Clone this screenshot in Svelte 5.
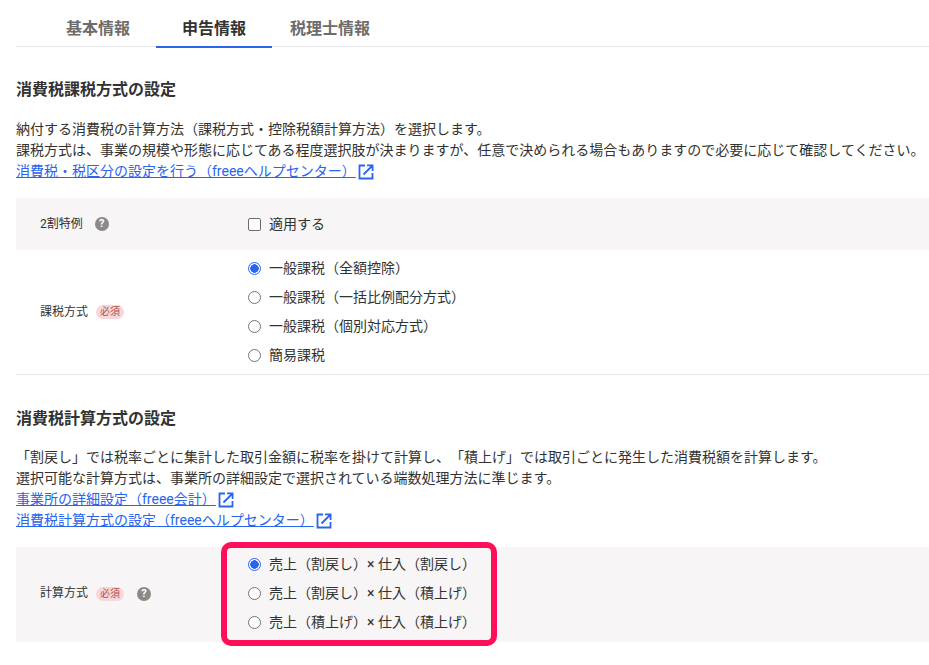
<script>
  const tabs = [
    { label: '基本情報' },
    { label: '申告情報', active: true },
    { label: '税理士情報' }
  ];
  const taxMethods = ['一般課税（全額控除）', '一般課税（一括比例配分方式）', '一般課税（個別対応方式）', '簡易課税'];
  const calcMethods = [
    '売上（割戻し）× 仕入（割戻し）',
    '売上（割戻し）× 仕入（積上げ）',
    '売上（積上げ）× 仕入（積上げ）'
  ];
</script>

{#snippet external()}
  <svg class="ext" viewBox="0 0 18 18" width="18" height="18" aria-hidden="true">
    <path d="M8 2.5H2.5v13h13V10" fill="none" stroke="#2864f0" stroke-width="1.8" />
    <path d="M6.5 11.5 15 3M10 2.4h5.6V8" fill="none" stroke="#2864f0" stroke-width="1.8" />
  </svg>
{/snippet}

{#snippet help()}
  <span class="help">?</span>
{/snippet}

{#snippet radio(checked)}
  <span class="radio" class:checked></span>
{/snippet}

<div class="page">
  <nav class="tabs">
    {#each tabs as tab}
      <span class="tab" class:active={tab.active}>{tab.label}</span>
    {/each}
  </nav>

  <section class="first">
    <h2>消費税課税方式の設定</h2>
    <p>
      納付する消費税の計算方法（課税方式・控除税額計算方法）を選択します。<br />
      課税方式は、事業の規模や形態に応じてある程度選択肢が決まりますが、任意で決められる場合もありますので必要に応じて確認してください。<br />
      <a href="#top">消費税・税区分の設定を行う（freeeヘルプセンター）</a>{@render external()}
    </p>

    <div class="row shaded first-row">
      <div class="label">2割特例<span class="gap"></span>{@render help()}</div>
      <label class="option"><span class="check"></span>適用する</label>
    </div>
    <div class="row ruled">
      <div class="label">課税方式<span class="req">必須</span></div>
      <div class="options">
        {#each taxMethods as name, i}
          <div class="option">{@render radio(i === 0)}{name}</div>
        {/each}
      </div>
    </div>
  </section>

  <section class="second">
    <h2>消費税計算方式の設定</h2>
    <p>
      「割戻し」では税率ごとに集計した取引金額に税率を掛けて計算し、「積上げ」では取引ごとに発生した消費税額を計算します。<br />
      選択可能な計算方式は、事業所の詳細設定で選択されている端数処理方法に準じます。<br />
      <a href="#top">事業所の詳細設定（freee会計）</a>{@render external()}<br />
      <a href="#top">消費税計算方式の設定（freeeヘルプセンター）</a>{@render external()}
    </p>

    <div class="row shaded calc">
      <div class="label">計算方式<span class="req">必須</span><span class="help-gap">{@render help()}</span></div>
      <div class="options">
        {#each calcMethods as name, i}
          <div class="option">{@render radio(i === 0)}{name}</div>
        {/each}
      </div>
      <div class="highlight"></div>
    </div>
  </section>
</div>

<style>
  :global(body) {
    margin: 0;
    background: #fff;
    overflow: hidden;
  }

  .page {
    height: 665px;
    overflow: hidden;
    padding-left: 16px;
    color: #323232;
    font-family: Roboto, "Noto Sans CJK JP", "Noto Sans", sans-serif;
    font-size: 14px;
    line-height: 21px;
    text-spacing-trim: space-all;
  }

  .tabs {
    display: flex;
    height: 46px;
    padding-left: 24px;
    border-bottom: 1px solid #e8e8e8;
    box-sizing: content-box;
  }

  .tab {
    padding: 18px 26px 0;
    height: 28px;
    font-size: 16px;
    line-height: 22px;
    font-weight: 700;
    color: #6e6b6b;
  }

  .tab:last-child {
    padding-left: 18px;
  }

  .tab.active {
    color: #323232;
    border-bottom: 2px solid #2864f0;
  }

  h2 {
    margin: 0;
    font-size: 16px;
    line-height: 24px;
    font-weight: 700;
  }

  p {
    margin: 17px 0 0;
  }

  a {
    color: #2864f0;
    text-decoration: underline;
  }

  .ext {
    vertical-align: top;
    margin-top: 2px;
    margin-left: 1px;
  }

  .first {
    padding-top: 31px;
  }

  .second {
    padding-top: 32px;
  }

  .second p {
    margin-top: 16px;
  }

  .row {
    position: relative;
    display: grid;
    grid-template-columns: 208px 1fr;
    align-items: center;
    padding-left: 24px;
    box-sizing: border-box;
  }

  .first-row {
    margin-top: 16px;
    height: 52px;
  }

  .shaded {
    background: #f7f5f5;
  }

  .ruled {
    height: 125px;
    border-bottom: 1px solid #e8e8e8;
  }

  .calc {
    margin-top: 16px;
    height: 95px;
    padding-bottom: 2px;
  }

  .label {
    display: flex;
    align-items: center;
    font-size: 12px;
  }

  .gap {
    width: 12px;
  }

  .help {
    display: inline-flex;
    align-items: center;
    justify-content: center;
    width: 14px;
    height: 14px;
    border-radius: 50%;
    background: #8c8989;
    color: #fff;
    font-size: 11px;
    font-weight: 700;
    line-height: 14px;
  }

  .help-gap {
    display: inline-flex;
    margin-left: 13px;
  }

  .req {
    margin-left: 8px;
    padding: 0 4px;
    border-radius: 7px;
    background: #f8d7da;
    color: #b4504f;
    font-size: 10px;
    line-height: 14px;
  }

  .options {
    display: flex;
    flex-direction: column;
    gap: 8px;
  }

  .option {
    display: flex;
    align-items: center;
    height: 21px;
    white-space: nowrap;
  }

  .radio {
    flex: none;
    width: 13px;
    height: 13px;
    margin-right: 8px;
    border: 1px solid #767474;
    border-radius: 50%;
    background: #fff;
    box-sizing: border-box;
  }

  .radio.checked {
    border-color: #2864f0;
    background: radial-gradient(circle, #2864f0 0 4px, #fff 4.5px);
  }

  .check {
    flex: none;
    width: 13px;
    height: 13px;
    margin-right: 8px;
    border: 1px solid #6e6b6b;
    border-radius: 2px;
    background: #fff;
    box-sizing: border-box;
  }

  .highlight {
    position: absolute;
    left: 205px;
    top: -5px;
    width: 276px;
    height: 104px;
    border: 6px solid #ff0f5a;
    border-radius: 10px;
    box-sizing: border-box;
    pointer-events: none;
  }
</style>
